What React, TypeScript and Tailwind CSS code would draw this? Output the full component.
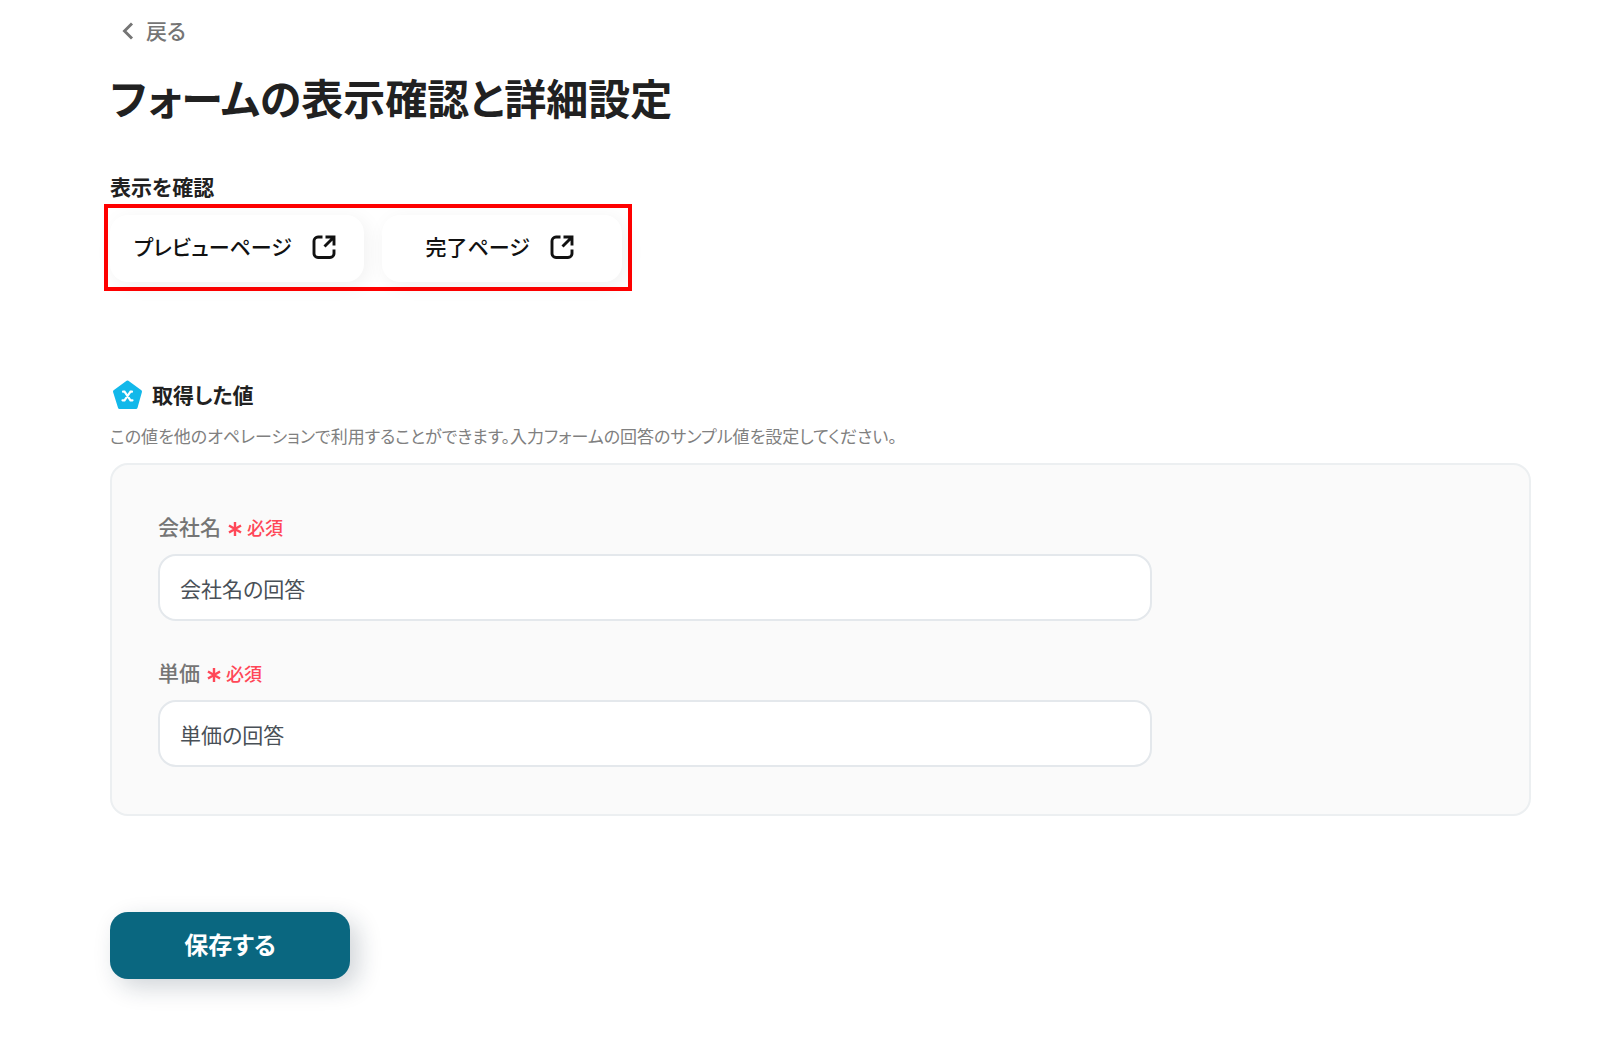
import { ReactNode, useState } from "react";

type Field = {
  id: string;
  label: string;
  sample: string;
};

const fields: Field[] = [
  { id: "company", label: "会社名", sample: "会社名の回答" },
  { id: "price", label: "単価", sample: "単価の回答" },
];

function OpenIcon() {
  return (
    <svg viewBox="0 0 32 32" className="h-8 w-8 shrink-0" fill="none" stroke="currentColor" strokeWidth="2.9" aria-hidden="true">
      <path d="M14.500 6H10A4 4 0 0 0 6 10V22.500A4 4 0 0 0 10 26.500H22A4 4 0 0 0 26 22.500V18.500" />
      <path d="M17.500 6H26V14.500M26 6L16.500 15.500" />
    </svg>
  );
}

function ValueIcon() {
  return (
    <svg viewBox="0 0 32 32" className="h-8 w-8 shrink-0" aria-hidden="true">
      <path
        d="M15.500 3L28.500 12.500L24 28.500H7.500L2.500 12.500Z"
        fill="#12b8ea"
        stroke="#12b8ea"
        strokeWidth="3"
        strokeLinejoin="round"
      />
      <path
        d="M11 12.700H12.500L18.500 21.300H20.500M20 12.700H18.500L12.500 21.300H10.500"
        fill="none"
        stroke="#fff"
        strokeWidth="2.200"
        strokeLinecap="round"
      />
    </svg>
  );
}

function RequiredMark() {
  return (
    <svg viewBox="0 0 22 22" className="h-[22px] w-[22px]" fill="none" stroke="currentColor" strokeWidth="2.400" aria-hidden="true">
      <path d="M11 6V20M5 9.500L17 16.500M17 9.500L5 16.500" />
    </svg>
  );
}

function PageLink({ children }: { children: ReactNode }) {
  return (
    <a
      href="#"
      className="flex h-[67px] min-w-60 items-center justify-center gap-4 rounded-[18px] bg-white px-6 pb-[3px] text-[21px] font-medium text-[#111111] shadow-[4px_4px_20px_rgba(0,0,0,0.06)]"
    >
      {children}
      <OpenIcon />
    </a>
  );
}

function SampleField({ field }: { field: Field }) {
  const [value, setValue] = useState(field.sample);

  return (
    <div className="flex flex-col gap-[11px]">
      <label htmlFor={field.id} className="flex h-8 items-center gap-[3px] text-[21px] font-medium text-[#757575]">
        {field.label}
        <span className="flex items-center gap-px text-[18px] text-[#ff4757]">
          <RequiredMark />
          必須
        </span>
      </label>
      <input
        id={field.id}
        type="text"
        required
        value={value}
        onChange={(e) => setValue(e.target.value)}
        className="h-[67px] w-3/4 rounded-[18px] border-2 border-[#e4e8ec] bg-white px-5 text-[21px] text-[#495057] outline-none"
      />
    </div>
  );
}

export default function App() {
  return (
    <main className="min-h-screen bg-white pt-[11px] pr-[69px] pb-20 pl-[110px] font-['Noto_Sans_CJK_JP',sans-serif] text-[#212121] [font-feature-settings:'palt']">
      <a href="#" className="inline-flex h-10 items-center gap-3 pl-3 text-[21px] font-medium text-[#757575]">
        <svg viewBox="0 0 12 18" className="h-[18px] w-3" fill="none" stroke="currentColor" strokeWidth="2.900" aria-hidden="true">
          <path d="M10 1.500L2.500 9L10 16.500" />
        </svg>
        戻る
      </a>

      <h1 className="mt-4 text-[42px] leading-[60px] font-semibold">フォームの表示確認と詳細設定</h1>

      <section className="mt-[43px]">
        <h2 className="text-[21px] leading-8 font-semibold">表示を確認</h2>
        <div className="mt-[2px] -ml-[6px] flex w-fit gap-[18px] border-4 border-[#ff0000] pt-[7px] pr-[6px] pb-[5px] pl-[2px]">
          <PageLink>プレビューページ</PageLink>
          <PageLink>完了ページ</PageLink>
        </div>
      </section>

      <form className="mt-[88px]" onSubmit={(e) => e.preventDefault()}>
        <h2 className="flex h-8 items-center gap-2 pl-[2px] text-[21px] font-semibold">
          <ValueIcon />
          取得した値
        </h2>
        <p className="mt-3 text-[17px] leading-[26px] text-[#808080]">
          この値を他のオペレーションで利用することができます。入力フォームの回答のサンプル値を設定してください。
        </p>

        <div className="mt-[14px] flex flex-col gap-9 rounded-[18px] border-2 border-[#eceff1] bg-[#fafafa] px-[46px] pt-[46px] pb-[47px]">
          {fields.map((field) => (
            <SampleField key={field.id} field={field} />
          ))}
        </div>

        <button
          type="submit"
          className="mt-24 h-[67px] w-60 rounded-[18px] bg-[#0a6780] pb-[3px] text-[24px] font-bold text-white shadow-[8px_8px_24px_rgba(20,40,60,0.2)]"
        >
          保存する
        </button>
      </form>
    </main>
  );
}
